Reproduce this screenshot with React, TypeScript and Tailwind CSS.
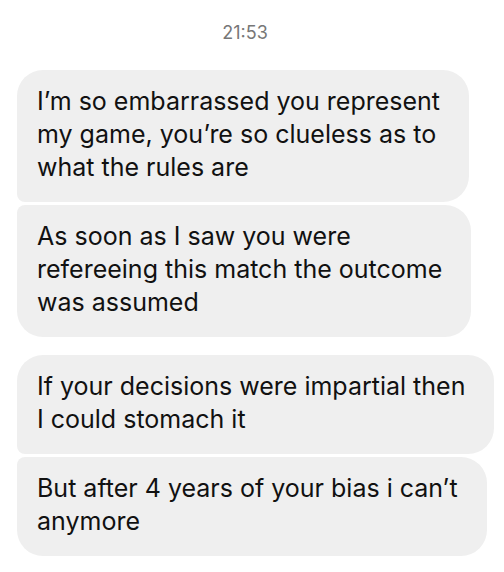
import React from 'react';

const messages: { lines: string[]; shape: string; gap: string }[] = [
    {
        lines: ['I’m so embarrassed you represent', 'my game, you’re so clueless as to', 'what the rules are'],
        shape: 'rounded-[26px] rounded-bl-[8px]',
        gap: 'mt-0',
    },
    {
        lines: ['As soon as I saw you were', 'refereeing this match the outcome', 'was assumed'],
        shape: 'rounded-[26px] rounded-tl-[8px]',
        gap: 'mt-[3px]',
    },
    {
        lines: ['If your decisions were impartial then', 'I could stomach it'],
        shape: 'rounded-[26px] rounded-bl-[8px]',
        gap: 'mt-[18px]',
    },
    {
        lines: ['But after 4 years of your bias i can’t', 'anymore'],
        shape: 'rounded-[26px] rounded-tl-[8px]',
        gap: 'mt-[3px]',
    },
];

export default function App() {
    return (
        <div className="w-[504px] h-[572px] bg-white overflow-hidden font-['Inter','Liberation_Sans',sans-serif]">
            <div className="pt-[22px] pr-[14px] text-center text-[18px] leading-[22px] text-[#777]">21:53</div>
            <div className="flex flex-col items-start pl-[17px] pt-[26px]">
                {messages.map((m, i) => (
                    <div key={i} className={`w-fit bg-[#efefef] pl-[20px] pr-[29px] pt-[15px] pb-[18px] text-[25px] leading-[33px] text-[#111] ${m.shape} ${m.gap}`}>
                        {m.lines.map((line, j) => (
                            <div key={j} className="whitespace-nowrap">{line}</div>
                        ))}
                    </div>
                ))}
            </div>
        </div>
    );
}
